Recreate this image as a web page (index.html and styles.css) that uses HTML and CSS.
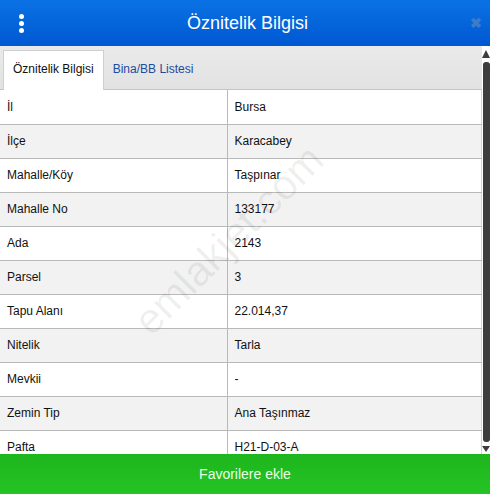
FILE: index.html
```html
<!DOCTYPE html>
<html>
<head>
  <meta charset="utf-8">
  <meta name="viewport" content="width=device-width">
  <title>Öznitelik Bilgisi</title>
  <link rel="stylesheet" href="styles.css">
</head>
<body>
  <div class="panel">
    <header class="topbar">
      <span class="menu"><i></i><i></i><i></i></span>
      <h1 class="title">Öznitelik Bilgisi</h1>
      <span class="close">&#x2716;</span>
    </header>

    <div class="body">
      <div class="content">
        <nav class="tabs">
          <span class="tab active">Öznitelik Bilgisi</span>
          <span class="tab">Bina/BB Listesi</span>
        </nav>
        <table class="attrs">
          <tbody>
            <tr><td>İl</td><td>Bursa</td></tr>
            <tr><td>İlçe</td><td>Karacabey</td></tr>
            <tr><td>Mahalle/Köy</td><td>Taşpınar</td></tr>
            <tr><td>Mahalle No</td><td>133177</td></tr>
            <tr><td>Ada</td><td>2143</td></tr>
            <tr><td>Parsel</td><td>3</td></tr>
            <tr><td>Tapu Alanı</td><td>22.014,37</td></tr>
            <tr><td>Nitelik</td><td>Tarla</td></tr>
            <tr><td>Mevkii</td><td>-</td></tr>
            <tr><td>Zemin Tip</td><td>Ana Taşınmaz</td></tr>
            <tr><td>Pafta</td><td>H21-D-03-A</td></tr>
          </tbody>
        </table>
        <span class="mark">emlakjet.com</span>
      </div>
      <div class="scroll">
        <span class="arrow up"></span>
        <span class="thumb"></span>
        <span class="arrow down"></span>
      </div>
    </div>

    <footer class="fav">Favorilere ekle</footer>
  </div>
</body>
</html>
```

FILE: styles.css
```css
html, body, h1, table, td {
  margin: 0;
  padding: 0;
  box-sizing: border-box;
}

body {
  width: 490px;
  height: 494px;
  overflow: hidden;
  background-color: #fff;
  color: #111;
  font-family: Arial, 'Liberation Sans', sans-serif;
  font-size: 12px;
}

.panel {
  display: flex;
  flex-direction: column;
  height: 494px;
}

/* blue title bar */
.topbar {
  height: 46px;
  flex: none;
  display: flex;
  align-items: center;
  padding: 0 8px 0 19px;
  background: linear-gradient(#0a72e4, #0058d2);
}

.menu {
  display: flex;
  flex-direction: column;
  gap: 2px;
  width: 6px;
}

.menu i {
  display: block;
  width: 5px;
  height: 5px;
  border-radius: 50%;
  background-color: #fff;
}

.title {
  flex: 1;
  text-align: center;
  color: #fff;
  font-size: 18px;
  font-weight: normal;
}

.close {
  color: #3f7cc8;
  font-size: 14px;
  font-weight: bold;
}

.body {
  flex: 1;
  min-height: 0;
  display: flex;
}

.content {
  position: relative;
  flex: 1;
  overflow: hidden;
}

/* tabs */
.tabs {
  display: flex;
  align-items: flex-end;
  height: 43px;
  padding-left: 3px;
  background: linear-gradient(#eaeaea, #e2e2e2);
  border-bottom: 1px solid #c4c4c4;
}

.tab {
  height: 38px;
  line-height: 37px;
  padding: 0 9px;
  color: #1d4b9e;
  font-size: 12px;
}

.tab.active {
  height: 39px;
  margin-bottom: -1px;
  color: #111;
  background-color: #fff;
  border: 1px solid #cfcfcf;
  border-bottom: none;
}

/* attribute rows */
.attrs {
  width: 482px;
  border-collapse: collapse;
}

.attrs td {
  height: 34px;
  padding: 0 7px;
  border-bottom: 1px solid #b9b9b9;
  vertical-align: middle;
}

.attrs td:first-child {
  width: 227px;
}

.attrs td + td {
  border-left: 1px solid #b9b9b9;
  border-right: 1px solid #d4d4d4;
}

.attrs tr:nth-child(even) td {
  background-color: #f2f2f2;
}

.mark {
  position: absolute;
  left: 105px;
  top: 170px;
  transform: rotate(-45deg);
  color: rgba(0, 0, 0, 0.07);
  font-size: 42px;
  pointer-events: none;
}

/* right scrollbar */
.scroll {
  width: 8px;
  flex: none;
  display: flex;
  flex-direction: column;
  align-items: center;
  padding: 4px 0 2px;
  gap: 4px;
  background-color: #fff;
}

.thumb {
  flex: 1;
  width: 7px;
  border-radius: 3px;
  background-color: #3d3d3d;
}

.arrow {
  width: 0;
  height: 0;
  border-left: 4px solid transparent;
  border-right: 4px solid transparent;
}

.arrow.up {
  border-bottom: 8px solid #3d3d3d;
}

.arrow.down {
  border-top: 6px solid #3d3d3d;
}

/* green action bar */
.fav {
  height: 40px;
  flex: none;
  line-height: 40px;
  text-align: center;
  color: #e8ffe6;
  font-size: 14px;
  background: linear-gradient(#1db61d, #25c325);
}
```
